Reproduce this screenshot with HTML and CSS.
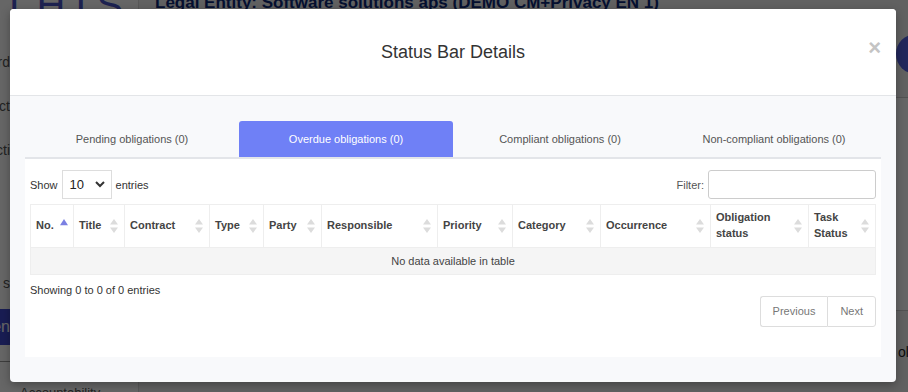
FILE: index.html
```html
<!DOCTYPE html>
<html lang="en">
<head>
	<meta charset="UTF-8">
	<title>Status Bar Details</title>
	<link rel="stylesheet" href="styles.css">
</head>
<body>
	<div class="page">
		<aside class="sidebar">
			<div class="logo">THIS</div>
			<ul class="nav">
				<li>Board</li>
				<li>Act</li>
				<li>Acti</li>
				<li class="nav-gap">s</li>
			</ul>
			<div class="nav-button">Gen</div>
			<div class="nav-foot">Accountability</div>
		</aside>
		<section class="main">
			<h1 class="entity">Legal Entity: Software solutions aps (DEMO CM+Privacy EN 1)</h1>
			<div class="main-side">
				<span class="round-btn"></span>
				<div class="side-panel"><span>ol</span></div>
			</div>
		</section>
	</div>

	<div class="backdrop"></div>

	<div class="modal">
		<div class="modal-header">
			<h2>Status Bar Details</h2>
			<span class="close">&times;</span>
		</div>
		<div class="modal-body">
			<ul class="tabs">
				<li>Pending obligations (0)</li>
				<li class="active">Overdue obligations (0)</li>
				<li>Compliant obligations (0)</li>
				<li>Non-compliant obligations (0)</li>
			</ul>
			<div class="panel">
				<div class="toolbar">
					<label class="length">Show
						<span class="select">10
							<svg width="10" height="7" viewBox="0 0 10 7"><path d="M1 1l4 4 4-4" fill="none" stroke="#333" stroke-width="2"/></svg>
						</span>
					entries</label>
					<label class="filter">Filter: <span class="input"></span></label>
				</div>
				<table>
					<thead>
						<tr>
							<th class="sorted" style="width: 43px">No.</th>
							<th style="width: 51px">Title</th>
							<th style="width: 85px">Contract</th>
							<th style="width: 54px">Type</th>
							<th style="width: 58px">Party</th>
							<th style="width: 116px">Responsible</th>
							<th style="width: 75px">Priority</th>
							<th style="width: 88px">Category</th>
							<th style="width: 110px">Occurrence</th>
							<th style="width: 98px">Obligation<br>status</th>
							<th>Task<br>Status</th>
						</tr>
					</thead>
					<tbody>
						<tr><td colspan="11">No data available in table</td></tr>
					</tbody>
				</table>
				<div class="info">Showing 0 to 0 of 0 entries</div>
				<div class="pager">
					<span>Previous</span>
					<span>Next</span>
				</div>
			</div>
		</div>
	</div>
</body>
</html>
```

FILE: styles.css
```css
body {
	margin     : 0;
	font-family: 'Liberation Sans', Arial, sans-serif;
	width      : 908px;
	height     : 392px;
	overflow   : hidden;
	position   : relative;
}

/* page behind the modal */
.page {
	display: flex;
	height : 392px;
}

.sidebar {
	width           : 138px;
	background-color: #fff;
	border-right    : 1px solid #ddd;
	flex-shrink     : 0;
	color           : #555;
	font-size       : 14px;
	overflow        : hidden;
}

.logo {
	height        : 10px;
	line-height   : 10px;
	padding-left  : 2px;
	font-size     : 40px;
	letter-spacing: 10px;
	color         : #4a55c9;
	overflow      : hidden;
	white-space   : nowrap;
}

.nav {
	list-style: none;
	margin    : 0;
	padding   : 0;
}

.nav li {
	height     : 44px;
	line-height: 44px;
	width      : 10px;
	direction  : rtl;
	overflow   : hidden;
	white-space: nowrap;
}

.nav li:first-child { margin-top: 30px; }

.nav .nav-gap { margin-top: 89px; }

.nav-button {
	margin-top      : 4px;
	height          : 36px;
	line-height     : 36px;
	width           : 10px;
	overflow        : hidden;
	direction       : rtl;
	background-color: #3f4ad0;
	color           : #fff;
	font-size       : 16px;
}

.nav-foot {
	margin-top  : 16px;
	border-top  : 1px solid #999;
	padding-top : 23px;
	padding-left: 20px;
	font-size   : 13px;
}

.main {
	flex            : 1;
	background-color: #f3f3f3;
	display         : flex;
	justify-content : space-between;
}

.entity {
	margin     : -7px 0 0 16px;
	font-size  : 17px;
	color      : #0d2a78;
	font-weight: bold;
	white-space: nowrap;
}

.main-side {
	width         : 12px;
	display       : flex;
	flex-direction: column;
}

.round-btn {
	margin-top      : 34px;
	width           : 40px;
	height          : 40px;
	border-radius   : 50%;
	background-color: #5562e6;
}

.side-panel {
	margin-top      : 23px;
	height          : 212px;
	border-top      : 1px solid #ccc;
	border-bottom   : 1px solid #ccc;
	background-color: #fff;
	position        : relative;
}

.side-panel span {
	position : absolute;
	top      : 246px;
	left     : 2px;
	color    : #222;
	font-size: 14px;
}

.backdrop {
	position        : absolute;
	inset           : 0;
	background-color: rgba(0, 0, 0, 0.6);
}

/* modal */
.modal {
	position        : absolute;
	top             : 9px;
	left            : 10px;
	width           : 886px;
	height          : 373px;
	background-color: #f8f9fb;
	border-radius   : 4px;
	overflow        : hidden;
	box-shadow      : 0 3px 10px rgba(0, 0, 0, 0.3);
	display         : flex;
	flex-direction  : column;
}

.modal-header {
	height          : 86px;
	background-color: #fff;
	border-bottom   : 1px solid #e3e5e8;
	display         : flex;
	align-items     : center;
	justify-content : center;
	position        : relative;
	flex-shrink     : 0;
}

.modal-header h2 {
	margin     : 0;
	font-size  : 18px;
	font-weight: normal;
	color      : #333;
}

.close {
	position   : absolute;
	top        : 26px;
	right      : 15px;
	font-size  : 22px;
	font-weight: bold;
	color      : #c4c4c4;
}

.modal-body {
	flex          : 1;
	padding       : 25px 15px;
	display       : flex;
	flex-direction: column;
}

.tabs {
	display              : grid;
	grid-template-columns: repeat(4, 1fr);
	list-style           : none;
	margin               : 0;
	padding              : 0;
	border-bottom        : 2px solid #e3e5e9;
}

.tabs li {
	height       : 36px;
	line-height  : 36px;
	text-align   : center;
	font-size    : 11px;
	color        : #555;
	border-radius: 3px 3px 0 0;
}

.tabs li.active {
	background-color: #6f80f6;
	color           : #fff;
}

.panel {
	flex            : 1;
	background-color: #fff;
	padding         : 0 5px;
	font-size       : 11px;
	color           : #333;
}

.toolbar {
	display        : flex;
	justify-content: space-between;
	align-items    : center;
	padding-top    : 11px;
	height         : 29px;
}

.toolbar label {
	display    : flex;
	align-items: center;
	gap        : 4px;
}

.select {
	width          : 50px;
	height         : 29px;
	box-sizing     : border-box;
	border         : 1px solid #ddd;
	display        : flex;
	align-items    : center;
	justify-content: space-between;
	padding        : 0 6px 0 7px;
	font-size      : 13px;
	color          : #222;
}

.filter { color: #555; }

.input {
	width        : 168px;
	height       : 29px;
	box-sizing   : border-box;
	border       : 1px solid #ccc;
	border-radius: 3px;
}

table {
	width          : 100%;
	border-collapse: collapse;
	margin-top     : 5px;
	table-layout   : fixed;
}

th {
	box-sizing : border-box;
	height     : 43px;
	border     : 1px solid #eee;
	padding    : 0 18px 2px 5px;
	text-align : left;
	font-size  : 11px;
	color      : #444;
	font-weight: bold;
	line-height: 16px;
	position   : relative;
}

th::after {
	content   : '';
	position  : absolute;
	right     : 6px;
	top       : 14px;
	width     : 8px;
	height    : 14px;
	clip-path : polygon(50% 0, 100% 40%, 0 40%, 0 60%, 100% 60%, 50% 100%, 0 60%, 0 40%);
	background: #dcdcdc;
}

th.sorted::after {
	clip-path : polygon(50% 0, 100% 45%, 0 45%);
	background: #7b80e2;
	left      : 29px;
	right     : auto;
}

td {
	box-sizing      : border-box;
	height          : 27px;
	background-color: #f5f5f5;
	border          : 1px solid #eee;
	text-align      : center;
	color           : #444;
	padding         : 0;
}

.info {
	margin-top: 9px;
	color     : #333;
}

.pager {
	display        : flex;
	justify-content: flex-end;
	margin-top     : 0;
}

.pager span {
	height     : 29px;
	line-height: 29px;
	padding    : 0 12px;
	border     : 1px solid #ddd;
	color      : #777;
}

.pager span:first-child {
	border-radius: 3px 0 0 3px;
	border-right : 0;
}

.pager span:last-child { border-radius: 0 3px 3px 0; }
```
